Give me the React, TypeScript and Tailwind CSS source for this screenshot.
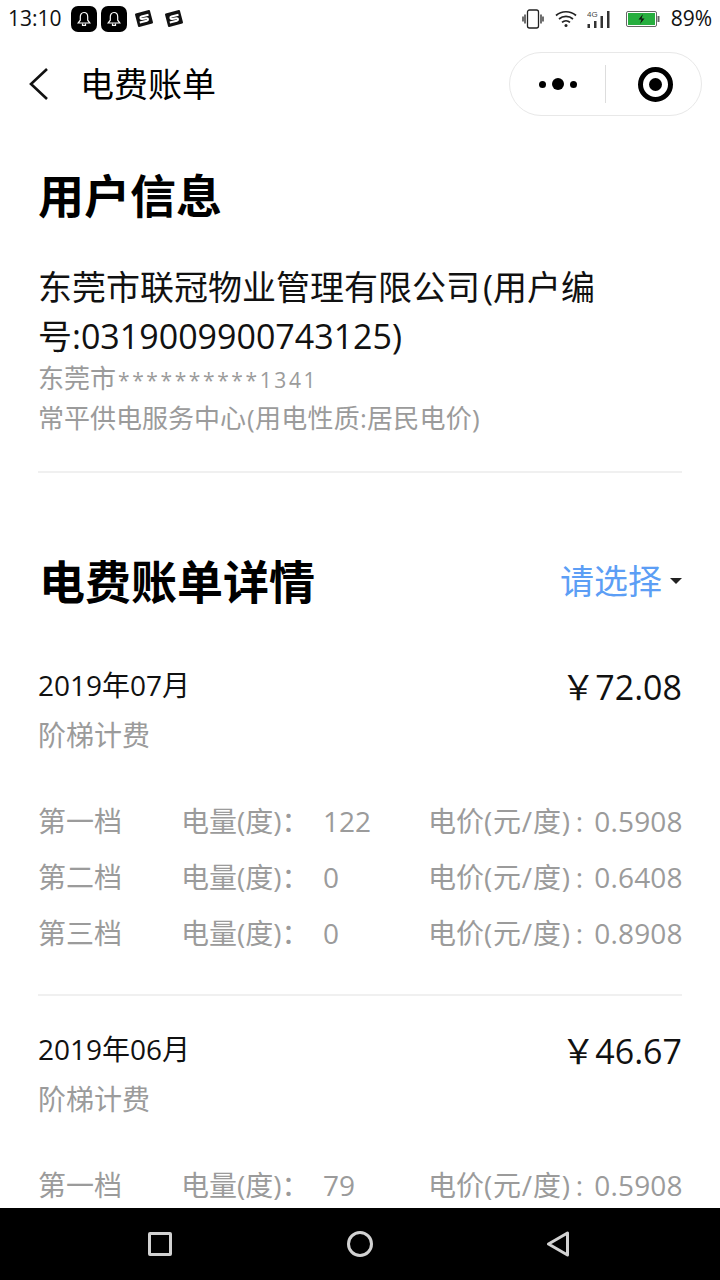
import React from "react";

const font = { fontFamily: '"Open Sans", "Noto Sans CJK SC", sans-serif' };

function Bell() {
  return (
    <span className="flex h-[26px] w-[26px] items-center justify-center rounded-[7px] bg-black">
      <svg width="18" height="18" viewBox="0 0 18 18" fill="none" stroke="#fff" strokeWidth="1.2">
        <path d="M9 2.500c-2.600 0-3.700 2-3.700 4.300v3.400L3.200 13h11.600l-2.100-2.800V6.800C12.700 4.500 11.600 2.500 9 2.500z" />
        <path d="M7.500 13.500v1.800h3v-1.800" />
      </svg>
    </span>
  );
}

function SIcon() {
  return (
    <svg width="20" height="20" viewBox="0 0 20 20">
      <path d="M2 5.500 15 2 18 13.500 5 17z" fill="#111" stroke="#111" strokeWidth="2" strokeLinejoin="round" />
      <path d="M14.500 5.800 7.500 7.500c-1.800.5-1.300 2.800.5 2.500l4.500-.8c1.800-.2 2.100 2.100.3 2.600l-7 1.700" fill="none" stroke="#fff" strokeWidth="2" />
    </svg>
  );
}

function StatusBar() {
  return (
    <div className="flex h-[38px] shrink-0 items-center justify-between px-[8px] text-[21px] text-[#111]">
      <div className="flex items-center">
        <span className="w-[63px]">13:10</span>
        <div className="flex items-center gap-[4px]"><Bell /><Bell /></div>
        <div className="ml-[7px] flex items-center gap-[10px]"><SIcon /><SIcon /></div>
      </div>
      <div className="flex items-center">
        <svg width="22" height="20" viewBox="0 0 22 20" fill="none" stroke="#222" strokeWidth="1.300">
          <rect x="5.500" y="1" width="11" height="18" rx="2" />
          <path d="M3 5.500v9M1 7.500v5M19 5.500v9M21 7.500v5" />
        </svg>
        <svg className="ml-[11px]" width="22" height="18" viewBox="0 0 22 18" fill="none" stroke="#222" strokeWidth="1.700">
          <path d="M1 5.500c5.500-5 14.500-5 20 0M4 9c4-3.500 10-3.500 14 0M7 12.300c2.300-2 5.700-2 8 0" />
          <circle cx="11" cy="15.500" r="1.500" fill="#222" stroke="none" />
        </svg>
        <svg className="ml-[10px]" width="24" height="20" viewBox="0 0 24 20">
          <text x="0" y="8" fontSize="8" fontFamily="Liberation Sans" fill="#444">4G</text>
          <rect x="0.500" y="15" width="2.500" height="4" fill="#333" />
          <rect x="7" y="12" width="2.500" height="7" fill="#333" />
          <rect x="13.500" y="7" width="2.500" height="12" fill="#333" />
          <rect x="20" y="2" width="2.500" height="17" fill="#333" />
        </svg>
        <svg className="ml-[15px]" width="34" height="16" viewBox="0 0 34 16">
          <rect x="0.500" y="0.500" width="30" height="15" rx="1.500" fill="#fff" stroke="#666" />
          <rect x="2" y="2" width="27" height="12" fill="#27ae3f" />
          <rect x="31.500" y="5" width="2" height="6" fill="#666" />
          <path d="M17 3l-4.500 5.500h3L14 13l4.500-5.500h-3z" fill="#111" />
        </svg>
        <span className="ml-[11px]">89%</span>
      </div>
    </div>
  );
}

function NavBar() {
  return (
    <div className="flex h-[92px] shrink-0 items-start pl-[28px] pr-[18px] pt-[14px]">
      <svg className="mt-[15px]" width="22" height="34" viewBox="0 0 22 34" fill="none" stroke="#111" strokeWidth="2.600">
        <path d="M19 2 3 17l16 15" />
      </svg>
      <span className="ml-[30px] mt-[10px] text-[34px] leading-[44px] text-black">电费账单</span>
      <div className="ml-auto flex h-[64px] w-[193px] items-center rounded-[32px] border border-[#e8e8e8]">
        <div className="flex w-[95px] items-center justify-center gap-[6px]">
          <span className="h-[7px] w-[7px] rounded-full bg-black" />
          <span className="h-[12px] w-[12px] rounded-full bg-black" />
          <span className="h-[7px] w-[7px] rounded-full bg-black" />
        </div>
        <div className="h-[38px] w-px bg-[#dddddd]" />
        <div className="flex flex-1 items-center justify-center pl-[3px]">
          <div className="flex h-[35px] w-[35px] items-center justify-center rounded-full border-[5px] border-black">
            <span className="h-[13px] w-[13px] rounded-full bg-black" />
          </div>
        </div>
      </div>
    </div>
  );
}

function TierRow({ name, qty, price }: { name: string; qty: string; price: string }) {
  return (
    <div className="flex h-[56px] items-center whitespace-nowrap text-[28px] text-[#9b9b9b]">
      <span className="w-[143px] shrink-0">{name}</span>
      <span className="w-[142px] shrink-0">电量(度)：</span>
      <span className="w-[105px] shrink-0">{qty}</span>
      <span className="shrink-0">
        电价<span className="tracking-[0.8px]">(元/度)</span>
        <span className="ml-[5px]">:</span>
        <span className="ml-[11px] tracking-[0.2px]">{price}</span>
      </span>
    </div>
  );
}

function Bill({ month, amount, tiers }: { month: string; amount: string; tiers: [string, string, string][] }) {
  return (
    <div>
      <div className="flex items-start justify-between">
        <span className="text-[28px] leading-[44px] text-[#111]">{month}</span>
        <span className="text-[34px] leading-[48px] text-[#111]">
          <span>￥</span>
          {amount}
        </span>
      </div>
      <div className="mt-[2px] text-[28px] leading-[44px] text-[#9b9b9b]">阶梯计费</div>
      <div className="mt-[36px]">
        {tiers.map((t) => (
          <TierRow key={t[0]} name={t[0]} qty={t[1]} price={t[2]} />
        ))}
      </div>
    </div>
  );
}

export default function App() {
  return (
    <div className="flex h-[1280px] w-[720px] flex-col overflow-hidden bg-white" style={font}>
      <StatusBar />
      <NavBar />
      <div className="min-h-0 flex-1 overflow-hidden px-[38px]">
        <h1 className="mt-[36px] text-[46px] font-bold leading-[58px] text-black">用户信息</h1>
        <p className="mt-[39px] text-[34px] leading-[49px] text-[#111]">
          东莞市联冠物业管理有限公司<span className="ml-[3px]">(用户编</span>号:0319009900743125)
        </p>
        <p className="-mt-[3px] text-[26px] leading-[40px] text-[#9b9b9b]">
          东莞市<span className="ml-[2px] text-[21px] tracking-[2.6px]">**********1341</span>
        </p>
        <p className="-mt-[2px] text-[26px] leading-[40px] text-[#9b9b9b]">
          常平供电服务中心<span className="ml-[1px] tracking-[0.25px]">(用电性质:居民电价)</span>
        </p>
        <div className="mt-[33px] h-[2px] bg-[#f0f0f0]" />
        <div className="mt-[76px] flex items-center justify-between">
          <h2 className="ml-[1px] text-[46px] font-bold leading-[64px] text-black">电费账单详情</h2>
          <div className="flex items-center">
            <span className="text-[34px] leading-[48px] text-[#5c9ef5]">请选择</span>
            <span className="ml-[8px] h-0 w-0 border-x-[6px] border-t-[6px] border-x-transparent border-t-[#222]" />
          </div>
        </div>
        <div className="mt-[50px]">
          <Bill month="2019年07月" amount="72.08" tiers={[["第一档", "122", "0.5908"], ["第二档", "0", "0.6408"], ["第三档", "0", "0.8908"]]} />
        </div>
        <div className="mt-[33px] h-[2px] bg-[#f0f0f0]" />
        <div className="mt-[31px]">
          <Bill month="2019年06月" amount="46.67" tiers={[["第一档", "79", "0.5908"]]} />
        </div>
      </div>
      <div className="flex h-[72px] shrink-0 justify-center bg-black">
        <div className="flex w-[480px] items-center justify-between pl-[28px] pr-[29px]">
          <span className="h-[24px] w-[24px] rounded-[2px] border-[3px] border-[#d2d2d2]" />
          <span className="h-[26px] w-[26px] rounded-full border-[3px] border-[#d2d2d2]" />
          <svg width="24" height="26" viewBox="0 0 24 26" fill="none" stroke="#d2d2d2" strokeWidth="3" strokeLinejoin="round">
            <path d="M20.500 2v22L1.500 13z" />
          </svg>
        </div>
      </div>
    </div>
  );
}
